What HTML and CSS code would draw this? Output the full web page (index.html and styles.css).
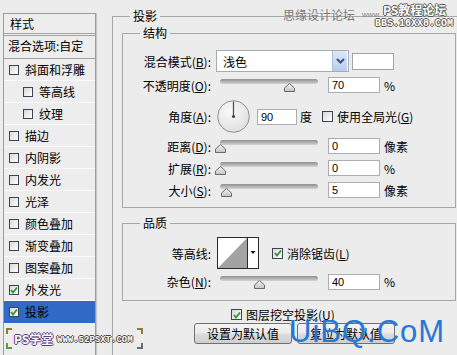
FILE: index.html
```html
<!DOCTYPE html>
<html lang="zh">
<head>
<meta charset="utf-8">
<title>图层样式 - 投影</title>
<link rel="stylesheet" href="styles.css">
</head>
<body>
<div class="dialog">
  <div class="styles">
    <div class="styles-head">样式</div>
    <div class="styles-blend">混合选项:自定</div>
    <ul class="style-list">
      <li><span class="cb"></span>斜面和浮雕</li>
      <li class="sub"><span class="cb"></span>等高线</li>
      <li class="sub"><span class="cb"></span>纹理</li>
      <li><span class="cb"></span>描边</li>
      <li><span class="cb"></span>内阴影</li>
      <li><span class="cb"></span>内发光</li>
      <li><span class="cb"></span>光泽</li>
      <li><span class="cb"></span>颜色叠加</li>
      <li><span class="cb"></span>渐变叠加</li>
      <li><span class="cb"></span>图案叠加</li>
      <li><span class="cb"><svg width="8" height="8" viewBox="0 0 8 8"><path d="M1 4 L3 6.5 L7 1.5" fill="none" stroke="#2a9a2a" stroke-width="1.8"/></svg></span>外发光</li>
      <li class="selected"><span class="cb"><svg width="8" height="8" viewBox="0 0 8 8"><path d="M1 4 L3 6.5 L7 1.5" fill="none" stroke="#2a9a2a" stroke-width="1.8"/></svg></span>投影</li>
    </ul>
  </div>

  <div class="main">
    <div class="group outer">
      <span class="group-title">投影</span>

      <div class="group struct">
        <span class="group-title">结构</span>

        <div class="row row-blend">
          <span class="lbl">混合模式(<u>B</u>):</span>
          <div class="select">
            <span class="select-text">浅色</span>
            <span class="select-btn"><svg width="9" height="6" viewBox="0 0 9 6"><path d="M1 1 L4.5 4.5 L8 1" fill="none" stroke="#3d5278" stroke-width="2"/></svg></span>
          </div>
          <span class="swatch"></span>
        </div>

        <div class="row row-opacity">
          <span class="lbl">不透明度(<u>O</u>):</span>
          <div class="slider"><div class="track"></div><span class="thumb" style="left:64px"><svg width="11" height="9" viewBox="0 0 11 9"><defs><linearGradient id="tg1" x1="0" y1="0" x2="0" y2="1"><stop offset="0" stop-color="#f4f4f4"/><stop offset="1" stop-color="#c4c4c4"/></linearGradient></defs><path d="M0.5 8.5 L0.5 5 L5.5 0.5 L10.5 5 L10.5 8.5 Z" fill="url(#tg1)" stroke="#6a6a6a"/></svg></span></div>
          <span class="num">70</span>
          <span class="unit">%</span>
        </div>

        <div class="row row-angle">
          <span class="lbl">角度(<u>A</u>):</span>
          <span class="dial"><svg width="33" height="33" viewBox="0 0 33 33"><defs><radialGradient id="dg" cx="0.4" cy="0.35" r="0.7"><stop offset="0" stop-color="#fafafa"/><stop offset="1" stop-color="#dedede"/></radialGradient></defs><circle cx="16.5" cy="16.5" r="15.8" fill="url(#dg)" stroke="#8e8e8e" stroke-width="1"/><line x1="16.5" y1="16.5" x2="16.5" y2="1.5" stroke="#555" stroke-width="1.3"/><circle cx="16.5" cy="16.5" r="1.6" fill="#444"/></svg></span>
          <span class="num angle">90</span>
          <span class="unit">度</span>
          <span class="cb cb-global"></span>
          <span class="cb-text">使用全局光(<u>G</u>)</span>
        </div>

        <div class="row row-dist">
          <span class="lbl">距离(<u>D</u>):</span>
          <div class="slider"><div class="track"></div><span class="thumb" style="left:-5px"><svg width="11" height="9" viewBox="0 0 11 9"><path d="M0.5 8.5 L0.5 5 L5.5 0.5 L10.5 5 L10.5 8.5 Z" fill="url(#tg1)" stroke="#6a6a6a"/></svg></span></div>
          <span class="num">0</span>
          <span class="unit">像素</span>
        </div>

        <div class="row row-spread">
          <span class="lbl">扩展(<u>R</u>):</span>
          <div class="slider"><div class="track"></div><span class="thumb" style="left:-5px"><svg width="11" height="9" viewBox="0 0 11 9"><path d="M0.5 8.5 L0.5 5 L5.5 0.5 L10.5 5 L10.5 8.5 Z" fill="url(#tg1)" stroke="#6a6a6a"/></svg></span></div>
          <span class="num">0</span>
          <span class="unit">%</span>
        </div>

        <div class="row row-size">
          <span class="lbl">大小(<u>S</u>):</span>
          <div class="slider"><div class="track"></div><span class="thumb" style="left:1px"><svg width="11" height="9" viewBox="0 0 11 9"><path d="M0.5 8.5 L0.5 5 L5.5 0.5 L10.5 5 L10.5 8.5 Z" fill="url(#tg1)" stroke="#6a6a6a"/></svg></span></div>
          <span class="num">5</span>
          <span class="unit">像素</span>
        </div>
      </div>

      <div class="group quality">
        <span class="group-title">品质</span>

        <div class="row row-contour">
          <span class="lbl">等高线:</span>
          <span class="contour"><svg width="42" height="32" viewBox="0 0 42 32"><rect x="0.5" y="0.5" width="41" height="31" fill="#fff" stroke="#2a2a2a"/><polygon points="1,31 30,1 30,31" fill="#a3a3a3"/><line x1="30.5" y1="0.5" x2="30.5" y2="31.5" stroke="#2a2a2a"/><polygon points="33.5,14 38.5,14 36,17" fill="#111"/></svg></span>
          <span class="cb cb-aa"><svg width="8" height="8" viewBox="0 0 8 8"><path d="M1 4 L3 6.5 L7 1.5" fill="none" stroke="#2a9a2a" stroke-width="1.8"/></svg></span>
          <span class="cb-text">消除锯齿(<u>L</u>)</span>
        </div>

        <div class="row row-noise">
          <span class="lbl">杂色(<u>N</u>):</span>
          <div class="slider"><div class="track"></div><span class="thumb" style="left:34px"><svg width="11" height="9" viewBox="0 0 11 9"><path d="M0.5 8.5 L0.5 5 L5.5 0.5 L10.5 5 L10.5 8.5 Z" fill="url(#tg1)" stroke="#6a6a6a"/></svg></span></div>
          <span class="num">40</span>
          <span class="unit">%</span>
        </div>
      </div>

      <div class="knock">
        <span class="cb cb-knock"><svg width="8" height="8" viewBox="0 0 8 8"><path d="M1 4 L3 6.5 L7 1.5" fill="none" stroke="#2a9a2a" stroke-width="1.8"/></svg></span>
        <span class="cb-text">图层挖空投影(<u>U</u>)</span>
      </div>

      <div class="buttons">
        <button class="btn">设置为默认值</button>
        <button class="btn">复位为默认值</button>
      </div>
    </div>
  </div>
</div>

<div class="wm-top">
  <span class="wm-sy">思缘设计论坛</span>
  <span class="wm-www">www.</span>
  <span class="wm-ps">PS教程论坛</span>
  <span class="wm-bbs">BBS.16XX8.COM</span>
</div>

<div class="wm-bottom">
  <span class="br br-tl"></span>
  <span class="br br-bl"></span>
  <span class="br br-tr"></span>
  <span class="br br-br"></span>
  <span class="wm-psxt">PS学堂</span>
  <span class="wm-url">WWW.52PSXT.COM</span>
</div>

<div class="wm-uibq">UiBQ.CoM</div>
</body>
</html>
```

FILE: styles.css
```css
* { box-sizing: border-box; }

body {
  margin: 0;
  width: 457px;
  height: 355px;
  overflow: hidden;
  position: relative;
  background: #ececec;
  font-family: "Noto Sans CJK SC", "Noto Sans", sans-serif;
  font-size: 12px;
  color: #000;
}

u { text-decoration: underline; text-underline-offset: 1px; }

.dialog {
  display: flex;
  align-items: flex-start;
  padding: 13px 0 0 3px;
}

/* ---------- left style list ---------- */
.styles {
  flex: none;
  width: 93px;
  height: 342px;
  border: 1px solid #9d9d9d;
  border-bottom: none;
  box-shadow: 1px 0 0 #c6c6c6;
  background: #ededed;
}

.styles-head {
  height: 22px;
  line-height: 19px;
  padding-left: 6px;
  border-bottom: 3px double #a3a3a3;
}

.styles-blend {
  height: 23px;
  line-height: 19px;
  padding-left: 4px;
  border-bottom: 1px solid #a3a3a3;
}

.style-list {
  list-style: none;
  margin: 0;
  padding: 0;
}

.style-list li {
  height: 22px;
  display: flex;
  align-items: center;
  gap: 6px;
  padding-left: 5px;
  border-bottom: 1px solid #fafafa;
}

.style-list li.sub { padding-left: 19px; }

.style-list li.selected {
  background: #316ac5;
  border-bottom-color: #316ac5;
}

.cb {
  flex: none;
  width: 10px;
  height: 10px;
  border: 1px solid #3a4550;
  background: linear-gradient(135deg, #d8d8d8, #ffffff);
  display: inline-flex;
  align-items: center;
  justify-content: center;
}

/* ---------- right panel ---------- */
.main {
  flex: none;
  margin-left: 16px;
  margin-top: 3px;
}

.group {
  position: relative;
  border: 1px solid #a7a7a7;
}

.group-title {
  position: absolute;
  top: -9px;
  left: 17px;
  padding: 0 3px;
  line-height: 16px;
  background: #ececec;
}

.outer {
  width: 345px;
  height: 339px;
  border-right: none;
  border-bottom: none;
  padding: 16px 0 0 9px;
}

.struct {
  width: 334px;
  padding: 16px 0 9px 0;
}

.quality {
  width: 334px;
  margin-top: 15px;
  padding: 13px 0 10px 0;
}

.row {
  display: flex;
  align-items: center;
  height: 16px;
  margin-top: 6px;
}

.lbl {
  flex: none;
  width: 88px;
  margin-right: 5px;
  text-align: right;
  white-space: nowrap;
}

.row-blend { height: 22px; margin-top: 0; }
.row-opacity { margin-top: 5px; }
.row-angle { height: 33px; margin-top: 7px; }
.row-dist { margin-top: 5px; }
.row-contour { height: 32px; margin-top: 0; }
.row-noise { margin-top: 4px; height: 17px; }

.select {
  flex: none;
  width: 133px;
  height: 22px;
  display: flex;
  align-items: center;
  border: 1px solid #a5acb5;
  background: #fff;
  padding-left: 6px;
}

.select-text { flex: 1; }

.select-btn {
  width: 15px;
  height: 20px;
  margin-right: 1px;
  display: flex;
  align-items: center;
  justify-content: center;
  background: linear-gradient(#dce8f8, #b7cdee);
  border-left: 1px solid #aac0e2;
}

.swatch {
  flex: none;
  width: 42px;
  height: 17px;
  margin-left: 3px;
  background: #fff;
  border: 1px solid #a3a3a3;
}

.slider {
  position: relative;
  flex: none;
  width: 98px;
  height: 16px;
  margin-left: 4px;
}

.track {
  margin-top: 2px;
  height: 5px;
  border-radius: 3px;
  background: linear-gradient(#8f8f8f, #b8b8b8 60%, #d4d4d4);
}

.thumb {
  position: absolute;
  top: 6px;
  width: 11px;
  height: 9px;
  display: block;
  line-height: 0;
}

.num {
  flex: none;
  width: 52px;
  height: 16px;
  margin-left: 10px;
  padding-left: 3px;
  background: #fff;
  border: 1px solid #abadb3;
  font-family: "Liberation Sans", Arial, sans-serif;
  font-size: 11px;
  line-height: 14px;
}

.unit { margin-left: 4px; }

.dial {
  flex: none;
  width: 33px;
  height: 33px;
  margin-left: 1px;
  line-height: 0;
}

.num.angle {
  width: 40px;
  margin-left: 7px;
}

.row-angle .unit { margin-left: 3px; }

.cb-global {
  width: 11px;
  height: 11px;
  margin-left: 10px;
}

.cb-text { margin-left: 4px; white-space: nowrap; }

.contour {
  flex: none;
  width: 42px;
  height: 32px;
  margin-left: 1px;
  line-height: 0;
}

.cb-aa {
  width: 11px;
  height: 11px;
  margin-left: 13px;
}

.knock {
  display: flex;
  align-items: center;
  height: 11px;
  margin-top: 8px;
  margin-left: 109px;
}

.cb-knock { width: 11px; height: 11px; }

.buttons {
  display: flex;
  gap: 5px;
  margin-top: 3px;
  margin-left: 72px;
}

.btn {
  width: 98px;
  height: 21px;
  padding: 0;
  border: 1px solid #707070;
  border-radius: 3px;
  background: linear-gradient(#f3f3f3, #ebebeb 48%, #dcdcdc 52%, #cfcfcf);
  font-family: "Noto Sans CJK SC", "Noto Sans", sans-serif;
  font-size: 12px;
  line-height: 18px;
  color: #000;
}

/* ---------- watermarks ---------- */
.wm-top {
  position: absolute;
  left: 283px;
  top: 0;
  width: 174px;
  height: 32px;
}

.wm-sy {
  position: absolute;
  left: 0;
  top: 7px;
  font-size: 12px;
  line-height: 16px;
  color: #7a7a7a;
}

.wm-www {
  position: absolute;
  left: 79px;
  top: 10px;
  font-family: "Liberation Sans", sans-serif;
  font-size: 8px;
  line-height: 10px;
  color: #8a8a8a;
}

.wm-ps {
  position: absolute;
  left: 100px;
  top: 2px;
  font-size: 12px;
  line-height: 16px;
  font-weight: bold;
  color: #fff;
  text-shadow: 1px 0 0 #555, -1px 0 0 #555, 0 1px 0 #555, 0 -1px 0 #555;
}

.wm-bbs {
  position: absolute;
  left: 92px;
  top: 18px;
  font-family: "Liberation Mono", monospace;
  font-weight: bold;
  font-size: 10px;
  line-height: 11px;
  color: #fff;
  text-shadow: 1px 0 0 #555, -1px 0 0 #555, 0 1px 0 #555, 0 -1px 0 #555;
}

.wm-bottom {
  position: absolute;
  left: 5px;
  top: 327px;
  width: 140px;
  height: 24px;
}

.br {
  position: absolute;
  width: 6px;
  height: 6px;
}
.br-tl { left: 1px; top: 1px; border-top: 2px solid #8a7d3e; border-left: 2px solid #8a7d3e; }
.br-bl { left: 1px; top: 16px; border-bottom: 2px solid #5e9a4e; border-left: 2px solid #5e9a4e; }
.br-tr { left: 132px; top: 1px; border-top: 2px solid #8a7d3e; border-right: 2px solid #8a7d3e; }
.br-br { left: 132px; top: 16px; border-bottom: 2px solid #6a6a6a; border-right: 2px solid #6a6a6a; }

.wm-psxt {
  position: absolute;
  left: 9px;
  top: 4px;
  font-size: 12px;
  font-weight: bold;
  line-height: 15px;
  color: #fff;
  text-shadow: 1px 0 0 #5b3d7e, -1px 0 0 #5b3d7e, 0 1px 0 #5b3d7e, 0 -1px 0 #5b3d7e;
}

.wm-url {
  position: absolute;
  left: 52px;
  top: 8px;
  font-family: "Liberation Mono", monospace;
  font-weight: bold;
  font-size: 9px;
  line-height: 10px;
  color: #fff;
  text-shadow: 1px 0 0 #444, -1px 0 0 #444, 0 1px 0 #444, 0 -1px 0 #444;
}

.wm-uibq {
  position: absolute;
  left: 289px;
  top: 314px;
  font-family: "Liberation Sans", Arial, sans-serif;
  font-size: 31px;
  line-height: 36px;
  letter-spacing: 1px;
  color: #2677d6;
}
```
